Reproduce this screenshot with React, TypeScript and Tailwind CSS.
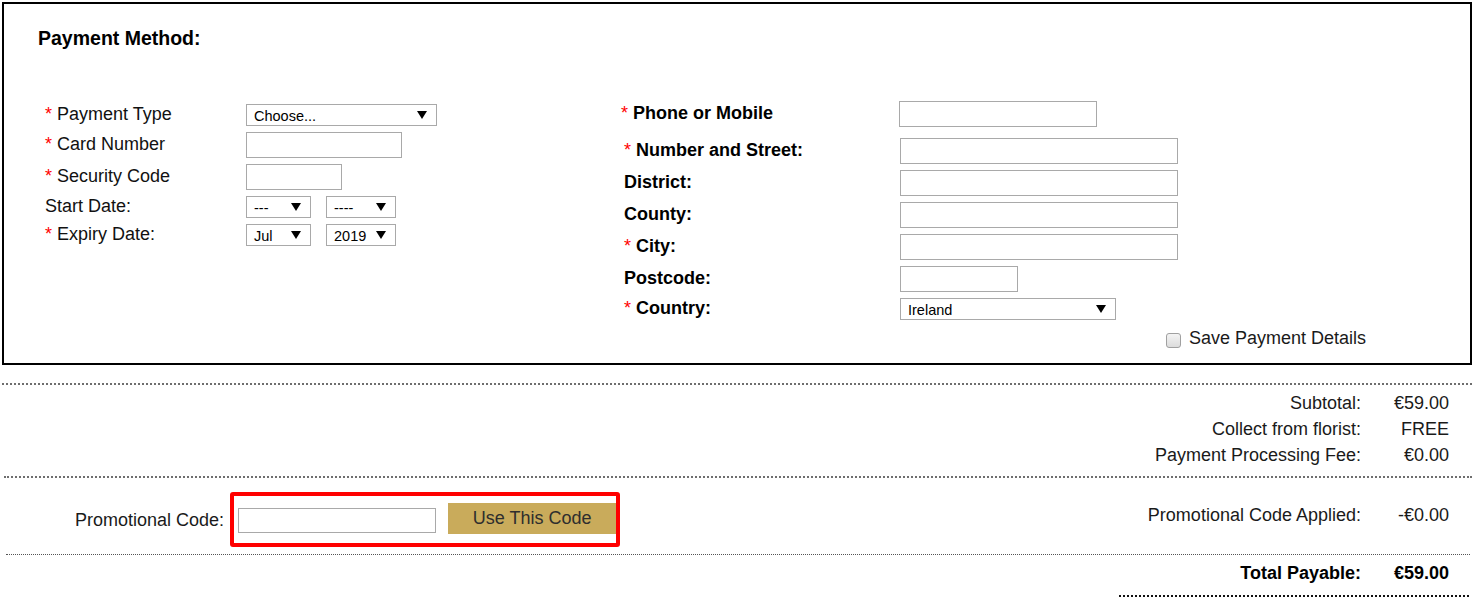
const font = { fontFamily: '"Liberation Sans", Arial, sans-serif' };

function Arrow() {
    return (
        <svg width="10" height="8" viewBox="0 0 10 8" className="shrink-0">
            <path d="M0 0 L10 0 L5 8 Z" fill="#000" />
        </svg>
    );
}

function FakeSelect({ value, className }: { value: string; className: string }) {
    return (
        <div className={`flex items-center justify-between border border-[#a9a9a9] bg-white pl-[7px] pr-[9px] text-[14.5px] text-black ${className}`}>
            <span className="leading-none pt-[2px]">{value}</span>
            <Arrow />
        </div>
    );
}

function TextBox({ className }: { className: string }) {
    return <div className={`border border-[#a9a9a9] bg-white ${className}`} />;
}

function Req() {
    return <span className="text-[#ff0000] font-normal">* </span>;
}

function LeftRow({ label, req, h, children }: { label: string; req?: boolean; h: string; children: React.ReactNode }) {
    return (
        <div className={`flex items-center ${h}`}>
            <div className="w-[201px] text-[18px] leading-[22px] text-[#111] -mt-[2px]">
                {req && <Req />}
                {label}
            </div>
            <div className="flex gap-[15px]">{children}</div>
        </div>
    );
}

function RightRow({ label, req, children }: { label: string; req?: boolean; children: React.ReactNode }) {
    return (
        <div className="flex items-center">
            <div className="w-[279px] pl-[3px] text-[18px] font-bold leading-[22px] text-black -mt-[2px]">
                {req && <Req />}
                {label}
            </div>
            {children}
        </div>
    );
}

function SumRow({ label, value, bold }: { label: string; value: string; bold?: boolean }) {
    return (
        <div className={`flex justify-end h-[26px] items-center text-[18px] ${bold ? 'font-bold text-black' : 'text-[#1a1a1a]'}`}>
            <span className="text-right">{label}</span>
            <span className="w-[88px] text-right">{value}</span>
        </div>
    );
}

export default function App() {
    return (
        <div className="bg-white w-[1475px] h-[603px] overflow-hidden" style={font}>
            <div className="ml-[2px] mt-[2px] w-[1470px] h-[363px] border-2 border-black">
                <h2 className="ml-[34px] mt-[22px] h-[24px] leading-[24px] text-[19.5px] font-bold text-black">Payment Method:</h2>

                <div className="flex mt-[51px]">
                    <div className="ml-[41px] w-[576px] mt-[3px] flex flex-col gap-[6px]">
                        <LeftRow label="Payment Type" req h="h-[22px]">
                            <FakeSelect value="Choose..." className="w-[191px] h-[22px]" />
                        </LeftRow>
                        <LeftRow label="Card Number" req h="h-[26px]">
                            <TextBox className="w-[156px] h-[26px]" />
                        </LeftRow>
                        <LeftRow label="Security Code" req h="h-[26px]">
                            <TextBox className="w-[96px] h-[26px]" />
                        </LeftRow>
                        <LeftRow label="Start Date:" h="h-[22px]">
                            <FakeSelect value="---" className="w-[65px] h-[22px]" />
                            <FakeSelect value="----" className="w-[70px] h-[22px]" />
                        </LeftRow>
                        <LeftRow label="Expiry Date:" req h="h-[22px]">
                            <FakeSelect value="Jul" className="w-[65px] h-[22px]" />
                            <FakeSelect value="2019" className="w-[70px] h-[22px]" />
                        </LeftRow>
                    </div>

                    <div className="flex flex-col">
                        <div className="flex items-center">
                            <div className="w-[278px] text-[18px] font-bold leading-[22px] text-black -mt-[2px]">
                                <Req />
                                Phone or Mobile
                            </div>
                            <TextBox className="w-[198px] h-[26px]" />
                        </div>
                        <div className="mt-[11px] flex flex-col gap-[6px]">
                            <RightRow label="Number and Street:" req>
                                <TextBox className="w-[278px] h-[26px]" />
                            </RightRow>
                            <RightRow label="District:">
                                <TextBox className="w-[278px] h-[26px]" />
                            </RightRow>
                            <RightRow label="County:">
                                <TextBox className="w-[278px] h-[26px]" />
                            </RightRow>
                            <RightRow label="City:" req>
                                <TextBox className="w-[278px] h-[26px]" />
                            </RightRow>
                            <RightRow label="Postcode:">
                                <TextBox className="w-[118px] h-[26px]" />
                            </RightRow>
                            <RightRow label="Country:" req>
                                <FakeSelect value="Ireland" className="w-[216px] h-[22px]" />
                            </RightRow>
                        </div>
                        <div className="flex items-center ml-[545px] mt-[5px]">
                            <div className="w-[15px] h-[15px] mt-[3px] rounded-[3px] border border-[#a0a0a0] bg-gradient-to-b from-[#f4f4f4] to-[#dcdcdc]" />
                            <span className="ml-[8px] text-[18px] text-[#1a1a1a] whitespace-nowrap">Save Payment Details</span>
                        </div>
                    </div>
                </div>
            </div>

            <div className="ml-[2px] mt-[18px] w-[1470px] border-t-2 border-dotted border-[#6e6e6e] pt-[5px] pb-[8px] pr-[23px]">
                <SumRow label="Subtotal:" value="€59.00" />
                <SumRow label="Collect from florist:" value="FREE" />
                <SumRow label="Payment Processing Fee:" value="€0.00" />
            </div>

            <div className="ml-[4px] w-[1468px] h-[78px] border-t-2 border-dotted border-[#6e6e6e] flex justify-between pr-[23px]">
                <div className="flex items-center mt-[14px] self-start">
                    <span className="ml-[71px] text-[18px] text-[#1a1a1a] mt-[2px]">Promotional Code:</span>
                    <div className="ml-[6px] w-[390px] h-[55px] border-4 border-[#ff0000] rounded-[3px] flex items-center">
                        <TextBox className="ml-[4px] w-[198px] h-[25px] mt-[2px]" />
                        <button className="ml-[12px] w-[168px] h-[31px] -mt-[2px] bg-[#c9ab5b] text-[18px] text-[#2e2e2e]">Use This Code</button>
                    </div>
                </div>
                <div className="mt-[24px] self-start">
                    <SumRow label="Promotional Code Applied:" value="-€0.00" />
                </div>
            </div>

            <div className="ml-[6px] w-[1464px] border-t border-dotted border-[#555] pt-[5px] mb-[9px] pr-[21px]">
                <SumRow label="Total Payable:" value="€59.00" bold />
            </div>

            <div className="ml-[1119px] w-[350px] border-t-2 border-dotted border-[#111]" />
        </div>
    );
}
